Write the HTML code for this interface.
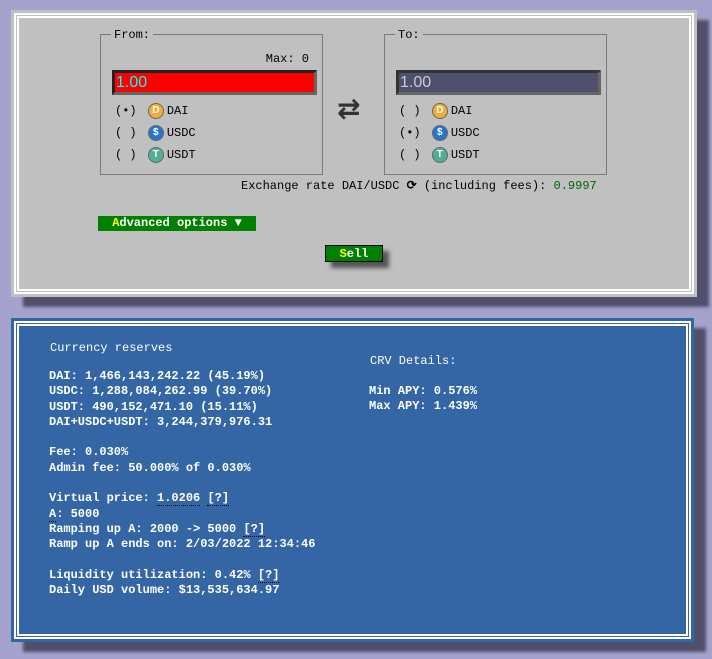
<!DOCTYPE html>
<html><head><meta charset="utf-8"><style>
body{margin:0;width:712px;height:659px;background:#a5a3cd;position:relative;overflow:hidden;font-family:"Liberation Mono","DejaVu Sans Mono",monospace;font-size:12px}
.p{position:absolute;box-shadow:12px 10px 3px #50506c}
.in{position:absolute;left:3px;top:3px;right:3px;bottom:3px;border:5px double #fff}
#top{left:11px;top:10px;width:686px;height:287px;background:#c0c0c0}
#bot{left:11px;top:318px;width:683px;height:324px;background:#3465a4}
.fs{position:absolute;border:1px solid #7a7a7a;width:221px;height:139px}
.lg{position:absolute;top:-7px;left:10px;background:#c0c0c0;padding:0 3px;color:#000}
.inp{position:absolute;left:11px;top:35px;width:198px;height:19px;border:3px solid;font-family:"Liberation Sans",sans-serif;font-size:16px;line-height:19px;padding-left:1px}
.r{position:absolute;left:14px;color:#000;white-space:pre;height:18px;line-height:18px}
.c{display:inline-block;width:16px;height:16px;border-radius:50%;vertical-align:middle;margin:0 3px 0 4px;border:1px solid #666;box-sizing:border-box;color:#fff;font:bold 10px "Liberation Sans",sans-serif;text-align:center;line-height:14px}
.t{position:absolute;color:#fff;font-weight:bold;white-space:pre;line-height:15.3px}
.u{border-bottom:1px dotted #000}
</style></head><body>
<div class="p" id="top"><div class="in"></div>
<div class="fs" style="left:89px;top:24px"><span class="lg">From:</span>
<div style="position:absolute;right:13px;top:17px">Max: 0</div>
<div class="inp" style="background:#f00;border-color:#222 #666 #666 #222;color:#0ff">1.00</div>
<div class="r" style="top:67px">(•) <span class="c" style="background:#f5ac37">D</span>DAI</div>
<div class="r" style="top:89px">( ) <span class="c" style="background:#2775ca">$</span>USDC</div>
<div class="r" style="top:111px">( ) <span class="c" style="background:#50af95">T</span>USDT</div>
</div>
<div style="position:absolute;left:326px;top:82px;font:bold 28px 'DejaVu Sans',sans-serif;color:#333">⇄</div>
<div class="fs" style="left:373px;top:24px"><span class="lg">To:</span>
<div class="inp" style="background:#4f4f6e;border-color:#333 #666 #666 #333;color:#ccc">1.00</div>
<div class="r" style="top:67px">( ) <span class="c" style="background:#f5ac37">D</span>DAI</div>
<div class="r" style="top:89px">(•) <span class="c" style="background:#2775ca">$</span>USDC</div>
<div class="r" style="top:111px">( ) <span class="c" style="background:#50af95">T</span>USDT</div>
</div>
<div style="position:absolute;left:230px;top:168px;white-space:pre">Exchange rate DAI/USDC <b>⟳</b> (including fees): <span style="color:#006400">0.9997</span></div>
<div style="position:absolute;left:87px;top:206px;width:158px;height:15px;background:#008000;color:#fff;font-weight:bold;text-align:center;line-height:15px"><span style="color:#ff0">A</span>dvanced options ▼</div>
<div style="position:absolute;left:314px;top:235px;width:58px;height:17px;background:#008000;color:#fff;font-weight:bold;text-align:center;line-height:17px;box-shadow:6px 6px 4px #555;border:1px solid #000;box-sizing:border-box"><span style="color:#ff0">S</span>ell</div>
</div>
<div class="p" id="bot"><div class="in"></div>
<div class="t" style="left:39px;top:23px;font-weight:normal">Currency reserves</div>
<div class="t" style="left:38px;top:51px">DAI: 1,466,143,242.22 (45.19%)
USDC: 1,288,084,262.99 (39.70%)
USDT: 490,152,471.10 (15.11%)
DAI+USDC+USDT: 3,244,379,976.31

Fee: 0.030%
Admin fee: 50.000% of 0.030%

Virtual price: <span class="u">1.0206</span> <span class="u">[?]</span>
<span class="u">A</span>: 5000
Ramping up A: 2000 -&gt; 5000 <span class="u">[?]</span>
Ramp up A ends on: 2/03/2022 12:34:46

Liquidity utilization: 0.42% <span class="u">[?]</span>
Daily USD volume: $13,535,634.97</div>
<div class="t" style="left:359px;top:36px;font-weight:normal">CRV Details:</div>
<div class="t" style="left:358px;top:66px">Min APY: 0.576%
Max APY: 1.439%</div>
</div>
</body></html>
